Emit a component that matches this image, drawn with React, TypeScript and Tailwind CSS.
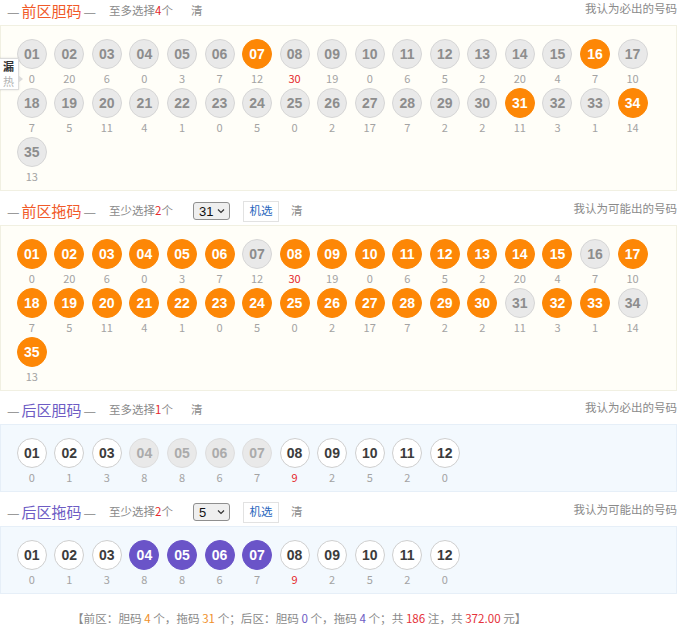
import React from "react";

const CJK = { fontFamily: '"Noto Sans CJK SC", "Noto Sans", sans-serif' };
const NUM = { fontFamily: '"Liberation Sans", Arial, sans-serif' };

const frontMiss = [0,20,6,0,3,7,12,30,19,0,6,5,2,20,4,7,10,7,5,11,4,1,0,5,0,2,17,7,2,2,11,3,1,14,13];
const backMiss = [0,1,3,8,8,6,7,9,2,5,2,0];
const pad = (n: number) => (n < 10 ? "0" + n : "" + n);

type Kind = "gray" | "orange" | "white" | "dis" | "purple";

function Ball({ n, kind, miss, red }: { n: number; kind: Kind; miss: number; red: boolean }) {
  const cls: Record<Kind, string> = {
    gray: "bg-[#e9e9e9] border border-[#d6d6d6] text-[#8d8d8d]",
    orange: "bg-[#fd8706] border border-[#fd8706] text-white",
    white: "bg-white border border-[#cfcfcf] text-[#3c3c3c]",
    dis: "bg-[#e9e9e9] border border-[#dedede] text-[#ababab]",
    purple: "bg-[#6a54c8] border border-[#6a54c8] text-white",
  };
  return (
    <div className="flex flex-col items-center w-[37.55px] mb-[1px]">
      <div
        className={`w-[30px] h-[30px] rounded-full flex items-center justify-center text-[14px] font-bold ${cls[kind]}`}
        style={NUM}
      >
        {pad(n)}
      </div>
      <div
        className={`h-[18px] leading-[18px] text-[11px] ${red ? "text-[#e5282c]" : "text-[#a3a3a3]"}`}
        style={CJK}
      >
        {miss}
      </div>
    </div>
  );
}

function Header({
  title,
  color,
  note,
  count,
  right,
  select,
}: {
  title: string;
  color: string;
  note: string;
  count: string;
  right: string;
  select?: string;
}) {
  return (
    <div className="h-[25px] flex items-start justify-between w-[677px]" style={CJK}>
      <div className="flex items-center h-[22px]">
        <span className="text-[14px] text-[#9a9a9a] ml-[7px]">—</span>
        <span className={`text-[15px] ml-[2px] ${color}`}>{title}</span>
        <span className="text-[14px] text-[#9a9a9a] ml-[2px]">—</span>
        <span className="text-[11.5px] text-[#8a8a8a] ml-[13px]">
          {note}
          <span className="text-[#e5282c]">{count}</span>个
        </span>
        {select ? (
          <>
            <div className="ml-[20px] w-[37px] h-[18px] border border-[#8f8f8f] rounded-[3px] bg-[#efefef] flex items-center justify-between pl-[5px] pr-[4px]">
              <span className="text-[13px] text-[#111] leading-none" style={NUM}>{select}</span>
              <svg width="8" height="6" viewBox="0 0 8 6">
                <path d="M1 1.5 L4 4.5 L7 1.5" fill="none" stroke="#333" strokeWidth="1.2" />
              </svg>
            </div>
            <div className="ml-[13px] w-[36px] h-[21px] border border-[#e2e2e2] bg-white flex items-center justify-center text-[11.5px] text-[#2866bd]">
              机选
            </div>
            <span className="text-[11.5px] text-[#8a8a8a] ml-[12px]">清</span>
          </>
        ) : (
          <span className="text-[11.5px] text-[#8a8a8a] ml-[18px]">清</span>
        )}
      </div>
      <span className="text-[11.5px] text-[#8a8a8a] mt-[-1px] leading-[18px]">{right}</span>
    </div>
  );
}

function Panel({ children, bg, tab }: { children: React.ReactNode; bg: string; tab?: boolean }) {
  return (
    <div className={`relative w-[677px] border ${bg} pl-[12px] pt-[13px] pb-[4px]`}>
      <div className="flex flex-wrap w-[640px]">{children}</div>
      {tab && (
        <div className="absolute left-[-3px] top-[32px] w-[21px] h-[32px] bg-white border border-[#dcdcdc] shadow-[0_0_2px_rgba(0,0,0,0.12)] flex flex-col items-center justify-center" style={CJK}>
          <span className="text-[11px] leading-[15px] font-bold text-[#333]">漏</span>
          <span className="text-[11px] leading-[15px] text-[#b0b0b0]">热</span>
          <div className="absolute right-[-5px] top-[16px] w-0 h-0 border-t-[4px] border-b-[4px] border-l-[5px] border-t-transparent border-b-transparent border-l-[#dcdcdc]"></div>
        </div>
      )}
    </div>
  );
}

export default function App() {
  const front = Array.from({ length: 35 }, (_, i) => i + 1);
  const back = Array.from({ length: 12 }, (_, i) => i + 1);
  const dan = [7, 16, 31, 34];
  const backTuo = [4, 5, 6, 7];
  return (
    <div className="w-[690px] h-[630px] bg-white overflow-hidden" style={CJK}>
      <Header title="前区胆码" color="text-[#f15a29]" note="至多选择" count="4" right="我认为必出的号码" />
      <Panel bg="bg-[#fffef8] border-[#f1f0e2]" tab>
        {front.map((n, i) => (
          <Ball key={n} n={n} kind={dan.includes(n) ? "orange" : "gray"} miss={frontMiss[i]} red={n === 8} />
        ))}
      </Panel>

      <div className="mt-[9px]">
        <Header title="前区拖码" color="text-[#f15a29]" note="至少选择" count="2" right="我认为可能出的号码" select="31" />
        <Panel bg="bg-[#fffef8] border-[#f1f0e2]">
          {front.map((n, i) => (
            <Ball key={n} n={n} kind={dan.includes(n) ? "gray" : "orange"} miss={frontMiss[i]} red={n === 8} />
          ))}
        </Panel>
      </div>

      <div className="mt-[8px]">
        <Header title="后区胆码" color="text-[#6d5cc4]" note="至多选择" count="1" right="我认为必出的号码" />
        <Panel bg="bg-[#f3f9fe] border-[#e6eff8]">
          {back.map((n, i) => (
            <Ball key={n} n={n} kind={backTuo.includes(n) ? "dis" : "white"} miss={backMiss[i]} red={n === 8} />
          ))}
        </Panel>
      </div>

      <div className="mt-[9px]">
        <Header title="后区拖码" color="text-[#6d5cc4]" note="至少选择" count="2" right="我认为可能出的号码" select="5" />
        <Panel bg="bg-[#f3f9fe] border-[#e6eff8]">
          {back.map((n, i) => (
            <Ball key={n} n={n} kind={backTuo.includes(n) ? "purple" : "white"} miss={backMiss[i]} red={n === 8} />
          ))}
        </Panel>
      </div>

      <div className="mt-[16px] pl-[72px] text-[11.6px] text-[#8a8a8a] leading-[16px]">
        【前区：胆码 <span className="text-[#f0902a]">4</span> 个，拖码 <span className="text-[#f0902a]">31</span> 个；后区：胆码{" "}
        <span className="text-[#6d5cc4]">0</span> 个，拖码 <span className="text-[#6d5cc4]">4</span> 个；共{" "}
        <span className="text-[#e5323a]">186</span> 注，共 <span className="text-[#e5323a]">372.00</span> 元】
      </div>
    </div>
  );
}
